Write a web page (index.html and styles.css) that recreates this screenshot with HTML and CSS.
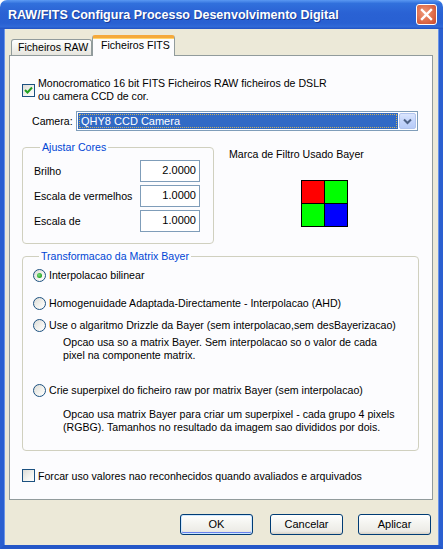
FILE: index.html
```html
<!DOCTYPE html>
<html>
<head>
<meta charset="utf-8">
<link rel="stylesheet" href="styles.css">
</head>
<body>
<div class="window">
  <div class="titlebar">
    <span class="title">RAW/FITS Configura Processo Desenvolvimento Digital</span>
    <span class="close">
      <svg width="13" height="13" viewBox="0 0 13 13"><path d="M2 2 L11 11 M11 2 L2 11" stroke="#fff" stroke-width="2.4" stroke-linecap="square"/></svg>
    </span>
  </div>
  <div class="client">
    <div class="tabs">
      <div class="tab">Ficheiros RAW</div>
      <div class="tab active">Ficheiros FITS</div>
    </div>
    <div class="panel">
      <div class="mono">
        <span class="check checked">
          <svg width="9" height="9" viewBox="0 0 9 9"><path d="M1 4 L3.5 6.5 L8 1.5" stroke="#21a121" stroke-width="2" fill="none"/></svg>
        </span>
        <span class="mono-text">Monocromatico 16 bit FITS Ficheiros RAW ficheiros de DSLR<br>ou camera CCD de cor.</span>
      </div>
      <div class="camera">
        <span class="camera-label">Camera:</span>
        <div class="combo">
          <div class="combo-value"><span class="focus">QHY8 CCD Camera</span></div>
          <div class="combo-btn">
            <svg width="9" height="7" viewBox="0 0 9 7"><path d="M1 1.5 L4.5 5 L8 1.5" stroke="#4d6185" stroke-width="2" fill="none"/></svg>
          </div>
        </div>
      </div>
      <div class="middle">
        <fieldset class="group colors">
          <legend>Ajustar Cores</legend>
          <div class="row"><span>Brilho</span><span class="input">2.0000</span></div>
          <div class="row"><span>Escala de vermelhos</span><span class="input">1.0000</span></div>
          <div class="row"><span>Escala de</span><span class="input">1.0000</span></div>
        </fieldset>
        <div class="bayer">
          <div class="bayer-label">Marca de Filtro Usado Bayer</div>
          <svg class="bayer-grid" width="47" height="47" viewBox="0 0 47 47">
            <rect x="0" y="0" width="47" height="47" fill="#000"/>
            <rect x="1" y="1" width="22" height="22" fill="#ff0000"/>
            <rect x="24" y="1" width="22" height="22" fill="#00ff00"/>
            <rect x="1" y="24" width="22" height="22" fill="#00ff00"/>
            <rect x="24" y="24" width="22" height="22" fill="#0000ff"/>
          </svg>
        </div>
      </div>
      <fieldset class="group bayer-group">
        <legend>Transformacao da Matrix Bayer</legend>
        <div class="radio-row r1"><span class="radio on"><span class="dot"></span></span>Interpolacao bilinear</div>
        <div class="radio-row r2"><span class="radio"></span>Homogenuidade Adaptada-Directamente - Interpolacao (AHD)</div>
        <div class="radio-row r3"><span class="radio"></span>Use o algaritmo Drizzle da Bayer (sem interpolacao,sem desBayerizacao)</div>
        <div class="desc d1">Opcao usa so a matrix Bayer. Sem interpolacao so o valor de cada<br>pixel na componente matrix.</div>
        <div class="radio-row r4"><span class="radio"></span>Crie superpixel do ficheiro raw por matrix Bayer (sem interpolacao)</div>
        <div class="desc d2">Opcao usa matrix Bayer para criar um superpixel - cada grupo 4 pixels<br>(RGBG). Tamanhos no resultado da imagem sao divididos por dois.</div>
      </fieldset>
      <div class="force">
        <span class="check"></span>
        <span>Forcar uso valores nao reconhecidos quando avaliados e arquivados</span>
      </div>
    </div>
    <div class="buttons">
      <div class="btn default">OK</div>
      <div class="btn cancel">Cancelar</div>
      <div class="btn apply">Aplicar</div>
    </div>
  </div>
</div>
</body>
</html>
```
FILE: styles.css
```css
* { box-sizing: border-box; }
html, body { margin: 0; padding: 0; background: #fff; }
body {
  font-family: "Liberation Sans", Arial, sans-serif;
  font-size: 10.6px;
  color: #000;
}
.window {
  width: 443px;
  height: 549px;
  display: flex;
  flex-direction: column;
}
.titlebar {
  height: 29px;
  flex: none;
  border-radius: 7px 7px 0 0;
  background: linear-gradient(to bottom, #5a98f2 0%, #3170dc 12%, #2a62d4 45%, #2860d2 80%, #3069d8 92%, #2152c2 100%);
  display: flex;
  align-items: center;
  padding: 0 6px 0 8px;
}
.title {
  color: #fff;
  font-family: "Liberation Sans", Arial, sans-serif;
  font-weight: bold;
  font-size: 12.5px;
  text-shadow: 1px 1px 0 #1a3c96;
  margin-top: 1px;
}
.close {
  margin-left: auto;
  width: 21px;
  height: 21px;
  border: 1px solid #fff;
  border-radius: 3px;
  background: radial-gradient(circle at 40% 40%, #ef9b7c 0%, #e0704e 50%, #c8472c 100%);
  display: flex;
  align-items: center;
  justify-content: center;
  margin-top: -1px;
}
.client {
  flex: 1;
  background: #ece9d8;
  border-left: 4px solid #2a5fd0;
  border-right: 4px solid #2a5fd0;
  border-bottom: 4px solid #2457c8;
  padding: 6px 6px 0 5px;
  box-shadow: inset 1px 0 0 #6a94e8, inset -1px 0 0 #6a94e8;
}
.tabs {
  height: 20px;
  display: flex;
  align-items: flex-end;
  padding-left: 2px;
  position: relative;
  z-index: 1;
}
.tab {
  height: 16px;
  width: 81px;
  border: 1px solid #919b9c;
  border-bottom: none;
  border-radius: 3px 3px 0 0;
  background: linear-gradient(to bottom, #ffffff 0%, #f3f3ef 50%, #e6e5de 100%);
  line-height: 14px;
  padding-left: 6px;
  white-space: nowrap;
}
.tab.active {
  height: 21px;
  width: 83px;
  margin-bottom: -1px;
  border-top: 3px solid #f5a93b;
  background: #fcfcfe;
  padding-left: 8px;
  line-height: 15px;
  box-shadow: inset 0 1px 0 #ffd36b;
}
.panel {
  height: 445px;
  width: 424px;
  border: 1px solid #919b9c;
  background: #fcfcfe;
  padding: 0 13px 0 12px;
  display: flex;
  flex-direction: column;
}
.check {
  width: 13px;
  height: 13px;
  flex: none;
  border: 1px solid #1c5180;
  background: linear-gradient(135deg, #dcdcd7 0%, #f4f4f0 60%, #ffffff 100%);
  display: flex;
  align-items: center;
  justify-content: center;
}
.mono {
  margin-top: 21px;
  display: flex;
  align-items: center;
  gap: 3px;
}
.mono-text { line-height: 13px; }
.camera {
  margin-top: 8px;
  padding-left: 10px;
  display: flex;
  align-items: center;
}
.camera-label { width: 44px; }
.combo {
  width: 342px;
  height: 20px;
  border: 1px solid #7f9db9;
  background: #fff;
  display: flex;
  padding: 1px;
}
.combo-value {
  flex: 1;
  background: #316ac5;
  color: #fff;
  padding: 1px 1px;
  display: flex;
  font-size: 11px;
}
.focus {
  flex: 1;
  border: 1px dotted #c8b060;
  line-height: 12px;
  padding-left: 1px;
}
.combo-btn {
  width: 17px;
  margin-left: 1px;
  border: 1px solid #b1c4ee;
  border-radius: 2px;
  background: linear-gradient(to bottom, #dbe6fd 0%, #c4d5fb 50%, #b7cbf8 100%);
  display: flex;
  align-items: center;
  justify-content: center;
}
.middle {
  margin-top: 10px;
  display: flex;
  align-items: flex-start;
}
.group {
  margin: 0;
  border: 1px solid #d0d0bf;
  border-radius: 4px;
  min-width: 0;
}
.group legend {
  color: #0046d5;
  padding: 0 2px;
  margin-left: 6px;
  line-height: 13px;
}
.colors {
  width: 192px;
  padding: 6px 13px 11px 11px;
  display: flex;
  flex-direction: column;
  gap: 3px;
}
.row {
  height: 22px;
  display: flex;
  align-items: center;
  justify-content: space-between;
}
.input {
  width: 60px;
  height: 22px;
  border: 1px solid #7f9db9;
  background: #fff;
  text-align: right;
  padding-right: 3px;
  line-height: 19px;
  font-size: 11px;
}
.bayer {
  margin-left: 15px;
  padding-top: 7px;
}
.bayer-label { line-height: 13px; }
.bayer-grid {
  display: block;
  margin-top: 19px;
  margin-left: 72px;
}
.bayer-group {
  margin-top: 6px;
  width: 397px;
  padding: 6px 10px 16px 10px;
}
.radio-row {
  height: 13px;
  line-height: 13px;
  display: flex;
  align-items: center;
  gap: 3px;
  white-space: nowrap;
}
.radio {
  width: 13px;
  height: 13px;
  flex: none;
  border: 1px solid #1c5180;
  border-radius: 50%;
  background: linear-gradient(135deg, #dcdcd7 0%, #f4f4f0 60%, #ffffff 100%);
  display: flex;
  align-items: center;
  justify-content: center;
}
.dot {
  width: 5px;
  height: 5px;
  border-radius: 50%;
  background: radial-gradient(circle at 40% 40%, #7ee27e 0%, #21a121 70%, #1a8a1a 100%);
}
.r1 { margin-top: 0; }
.r2 { margin-top: 15px; }
.r3 { margin-top: 9px; }
.d1 { margin-top: 4px; }
.r4 { margin-top: 22px; }
.d2 { margin-top: 11px; }
.desc {
  padding-left: 30px;
  line-height: 13px;
  white-space: nowrap;
}
.force {
  margin-top: 18px;
  display: flex;
  align-items: center;
  gap: 3px;
}
.buttons {
  margin-top: 14px;
  display: flex;
}
.btn {
  width: 73px;
  height: 21px;
  border: 1px solid #003c74;
  border-radius: 3px;
  background: linear-gradient(to bottom, #ffffff 0%, #f5f5f1 40%, #ecebe6 85%, #d6d0c5 100%);
  text-align: center;
  line-height: 19px;
  font-size: 11px;
}
.btn.default {
  margin-left: 171px;
  box-shadow: inset 0 0 0 1px #cee7ff, inset 0 -1px 0 1px #6982ee;
}
.btn.cancel { margin-left: 17px; }
.btn.apply { margin-left: 15px; }
```
